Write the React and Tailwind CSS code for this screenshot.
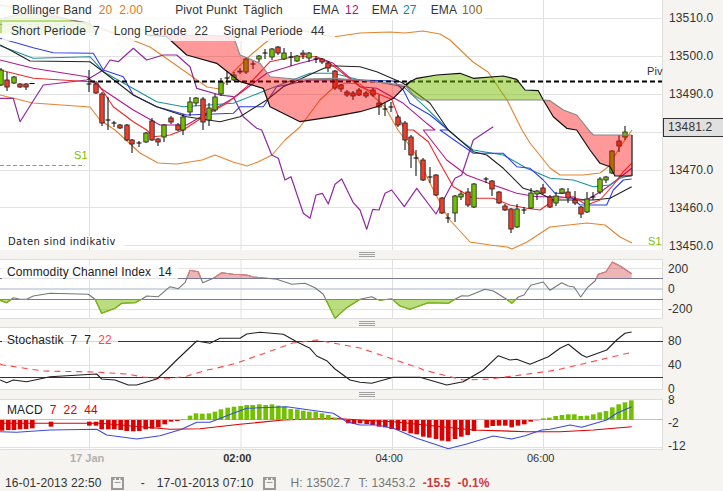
import React from "react";

const z = (ox, oy, a) => a.map(([x, y]) => [ox + x / 3, oy + y / 3]);
const pts = (a) => a.map(([x, y]) => `${x.toFixed(1)},${y.toFixed(1)}`).join(" ");

const L = (a) => z(0, 0, a);
const R = (a) => z(360, 0, a);
const L3 = (a) => z(0, 130, a);
const R3 = (a) => z(360, 130, a);

const bbUp = [[0,5],[40,12],[83,23],[100,28],[127,38],[150,47],[173,63],[190,75],[207,87],[220,89],[233,72],[253,53],[277,33],[300,30],[333,37],[360,33],[390,32],[405,33],[423,31],[440,34],[450,40],[473,62],[488,72],[507,100],[522,130],[530,143],[550,168],[560,175],[583,175],[600,173],[608,167],[620,147],[632,130]];
const bbLo = [[0,95],[33,103],[90,107],[100,120],[115,130],[140,153],[158,163],[177,164],[202,160],[215,155],[233,162],[247,166],[258,162],[272,155],[285,140],[300,127],[320,100],[333,88],[345,83],[360,84],[370,93],[385,107],[398,130],[415,153],[432,187],[448,218],[470,242],[490,245],[507,247],[512,249],[527,242],[550,227],[587,223],[605,225],[620,237],[632,243]];
const black = [...L([[0,135],[30,150],[90,183],[270,185],[310,215],[400,285],[470,320],[560,350],[660,365],[720,350],[800,300],[850,260],[960,210],[990,197],[1080,200]]), ...R([[50,215],[130,250],[210,310],[265,390]]), ...R3([[340,65],[380,75],[430,115],[490,175],[540,190],[580,210],[700,210],[750,205],[815,170]])];
const teal = [...L([[0,137],[100,175],[270,170],[310,215],[390,260],[470,305],[550,320],[700,310],[800,270],[930,220],[1000,220],[1080,240]]), ...R([[50,245],[130,260],[200,325],[265,390]]), ...R3([[300,30],[340,60],[430,75],[500,115],[570,145],[640,150],[700,170],[750,165],[780,145],[815,135]])];
const blue = [...L([[0,115],[100,143],[160,158],[280,160],[310,210],[370,230],[400,285],[470,320],[560,345],[700,340],[720,320],[790,320],[830,260],[930,240],[1080,240]]), ...R([[100,243],[130,270],[150,310],[210,345],[265,390]]), ...R3([[240,0],[290,35],[340,70],[430,70],[470,110],[510,115],[550,150],[585,190],[620,190],[660,225],[740,225],[760,180],[790,150],[815,147]])];
const red = [...L([[0,210],[100,235],[270,245],[290,245],[340,320],[400,365],[440,390],[460,410],[510,405],[550,390],[610,350],[680,310],[740,260],[810,185],[880,170],[950,170],[990,190],[1080,260]]), ...R([[95,298],[115,350],[135,390]]), ...R3([[160,0],[205,35],[240,100],[280,170],[340,205],[400,205],[450,225],[500,235],[540,240],[590,205],[640,200],[680,225],[720,210],[760,165],[790,125],[815,100]])];
const magenta = [...L([[0,180],[100,205],[260,230],[310,270],[400,330],[480,375],[560,375],[620,340],[700,295],[800,220],[900,190],[960,175],[1000,190],[1080,260]]), ...R([[50,265],[130,310],[200,370],[225,390]]), ...R3([[190,0],[260,90],[320,135],[400,165],[470,190],[530,200],[600,200],[680,210],[730,180],[770,150],[815,115]])];
const purple = [...L([[0,295],[40,295],[60,365],[130,255],[260,240],[310,210],[330,180],[355,185],[400,145],[440,180],[490,165],[530,165],[570,200],[590,265],[660,285],[700,290],[730,350],[770,385]]), ...L3([[785,0],[815,75],[835,85],[855,150],[873,140],[910,250],[930,265],[948,195],[967,190],[985,222],[1005,163],[1025,147],[1060,218],[1080,240]]), ...R3([[20,298],[38,238],[57,240],[75,190],[95,180],[133,230],[170,175],[228,252],[285,145],[305,135],[340,30],[385,0]]), ...R([[400,380]])];

const cloudR1Top = [...L([[440,105],[700,108],[720,165],[780,190],[810,230],[890,238],[1000,235],[1080,240]]), ...R([[130,255]])];
const cloudR1Bot = [...R([[150,245],[130,265],[100,295],[50,320],[0,335]]), ...L([[1000,350],[900,365],[810,320],[790,265],[720,245],[650,190],[560,165],[500,110],[440,105]])];
const cloudGTop = R([[135,255],[150,245],[170,235],[230,225],[300,220],[340,235],[430,228],[470,238],[495,270],[535,272],[550,300]]);
const cloudGBot = R([[550,300],[185,300],[160,285],[135,255]]);
const cloudR2Top = [...R([[550,300],[570,302],[610,330],[650,345],[690,395]]), ...R3([[700,15],[815,15]])];
const cloudR2Bot = [...R3([[815,138],[765,138],[750,110],[720,100],[690,60],[650,0]]), ...R([[620,385],[580,350],[550,300]])];
const cloudG0 = L([[0,57],[50,45],[100,40],[270,70],[290,100],[0,100]]);

// x, bodyTop, bodyBottom, wickTop, wickBottom, kind
const candles = [
  [1,70,85,68,86,"g"],[7,80,87,72,91,"r"],[14,77,83,76,84,"g"],[20,84,87,83,88,"r"],[26,84,87,83,90,"r"],[32,83.5,83.5,83,84,"c"],
  [89,84,84,70,92,"c"],[96,84,93,82,94,"r"],[102,94,123,92,126,"r"],[108,120,120,97,130,"c"],[114,123,123,121,127,"c"],[120,125,128,124,129,"r"],[127,125,140,124,141,"r"],
  [132,140,144,139,153,"r"],[139,143,143,141,147,"c"],[146,133,142,132,143,"g"],[152,121,140,118,141,"r"],[158,139,142,138,146,"r"],[164,125,137,124,142,"g"],
  [171,118,122,116,124,"r"],[178,125,130,123,131,"r"],[183,117,130,114,135,"g"],[190,102,112,97,116,"g"],[196,98,103,97,106,"g"],[203,99,122,97,130,"r"],[209,108,120,103,126,"g"],[215,97,110,94,112,"g"],
  [221,82,94,78,96,"g"],[227,78,78,71,85,"c"],[234,75,80,72,81,"g"],[240,71,72,68,74,"r"],[246,59,72,57,74,"g"],[253,64,64,61,69,"c"],[259,56,59,55,62,"g"],[265,53,53,49,59,"c"],
  [272,49,57,48,60,"g"],[278,47,53,46,55,"r"],[284,53,59,48,60,"g"],[291,57,57,52,66,"c"],[297,56,61,55,62,"g"],[303,53,55,50,59,"r"],[309,53,58,52,62,"g"],[316,59,59,56,63,"c"],[322,59,62,58,64,"r"],
  [328,63,68,61,72,"r"],[335,71,88,70,90,"r"],[341,85,89,84,92,"r"],[347,92,95,90,97,"r"],[353,93,96,91,100,"r"],[359,90,95,88,96,"r"],[366,93,96,91,98,"r"],[373,90,95,88,97,"r"],
  [379,103,107,95,115,"r"],[385,109,109,103,116,"c"],[391,107,107,102,112,"c"],[398,117,125,115,127,"r"],[405,123,140,121,150,"r"],[411,137,155,135,168,"r"],[416,158,158,150,176,"c"],[423,160,180,158,181,"r"],
  [430,177,177,167,183,"c"],[436,175,195,174,196,"r"],[442,198,213,197,214,"r"],[448,218,218,213,223,"c"],[455,196,213,195,222,"g"],[461,194,197,191,200,"g"],[468,192,205,188,207,"r"],[474,184,207,183,208,"g"],
  [486,179,179,177,183,"c"],[492,181,189,180,196,"r"],[499,192,203,191,204,"r"],[505,206,210,204,211,"r"],[511,209,229,208,233,"r"],[517,209,227,204,228,"g"],[524,210,210,207,214,"c"],
  [531,193,208,188,209,"g"],[537,191,194,190,200,"g"],[543,188,193,184,194,"r"],[550,197,207,195,208,"r"],[556,196,203,192,206,"g"],[562,189,193,188,194,"g"],[568,192,198,188,203,"r"],[575,200,203,191,205,"r"],
  [581,207,214,206,218,"r"],[587,199,212,192,213,"g"],[593,197,197,192,200,"c"],[600,179,192,177,194,"g"],[606,177,180,176,183,"g"],[612,151,173,150,174,"g"],[619,141,146,135,152,"r"],[625,132,137,126,140,"g"],
];

const Candles = () => (
  <g>
    {candles.map(([x, t, b, hi, lo, k], i) => (
      <g key={i}>
        <line x1={x} x2={x} y1={hi} y2={lo} stroke="#000" strokeWidth="1" />
        {k === "c" ? (
          <line x1={x - 2.5} x2={x + 2.5} y1={t} y2={t} stroke="#000" strokeWidth="1" />
        ) : (
          <rect x={x - 2.2} y={t} width="4.4" height={b - t} fill={k === "g" ? "#72c000" : "#f03c28"} stroke="#222" strokeWidth="0.8" />
        )}
      </g>
    ))}
  </g>
);

const HGrid = ({ ys }) => ys.map((y) => <line key={y} x1="0" x2="663" y1={y} y2={y} stroke="#e2e2e2" strokeWidth="1" />);
const VGrid = ({ y1, y2 }) => [89.5, 241, 392.5, 543.5].map((x) => <line key={x} x1={x} x2={x} y1={y1} y2={y2} stroke="#e0e0e0" strokeWidth="1" />);
const Poly = ({ p, c, w = 1, dash }) => <polyline points={pts(p)} fill="none" stroke={c} strokeWidth={w} strokeLinejoin="round" strokeDasharray={dash} />;

const Main = () => (
  <svg viewBox="0 0 663 250" className="block h-[250px] w-[663px]">
    <HGrid ys={[18.5, 56.5, 94.5, 132.5, 170.5, 207.5, 245.5]} />
    <VGrid y1={0} y2={250} />
    <Poly p={[[0,24.5],[84,24.5]]} c="#aaa" dash="4 3" />
    <Poly p={[[0,165.5],[85,165.5]]} c="#7ac000" dash="4 2.5" />
    <Poly p={bbUp} c="#e5832f" w={1.1} />
    <Poly p={bbLo} c="#e5832f" w={1.1} />
    <Poly p={purple} c="#8e2aa0" w={1.2} />
    <Poly p={magenta} c="#b01a8c" w={1.1} />
    <Poly p={teal} c="#1f8f9f" w={1.1} />
    <Poly p={blue} c="#2f3fe8" w={1.1} />
    <Poly p={black} c="#222" w={1.1} />
    <Poly p={red} c="#f02828" w={1.1} />
    <Candles />
    <line x1="90" x2="662" y1="81.5" y2="81.5" stroke="#000" strokeWidth="2" strokeDasharray="5 3" />
    <polygon points={pts([...cloudR1Top, ...cloudR1Bot])} fill="#ff0000" fillOpacity="0.4" />
    <polygon points={pts([...cloudR2Top, ...cloudR2Bot])} fill="#ff0000" fillOpacity="0.4" />
    <polygon points={pts([...cloudGTop, ...cloudGBot])} fill="#76bc00" fillOpacity="0.5" />
    <polygon points={pts(cloudG0)} fill="#76bc00" fillOpacity="0.5" />
    <Poly p={cloudG0.slice(0, 5)} c="#888" w={1.1} />
    <Poly p={cloudR1Top} c="#888" w={1.1} />
    <Poly p={cloudR1Bot} c="#111" w={1.2} />
    <Poly p={cloudGTop} c="#111" w={1.2} />
    <Poly p={cloudGBot} c="#888" w={1.2} />
    <Poly p={cloudR2Top} c="#888" w={1.2} />
    <Poly p={cloudR2Bot} c="#111" w={1.2} />
    <line x1="632" x2="632" y1="135" y2="176" stroke="#111" strokeWidth="1.2" />
  </svg>
);

const cci = [...z(0, 250, [[0,148],[20,155],[40,140],[60,145],[80,145],[100,135],[150,127],[265,130],[285,145],[305,187],[345,172],[365,157],[405,155],[425,145],[440,135],[475,137],[510,107],[535,113],[555,95],[570,58],[595,62],[608,95],[640,82],[665,65],[700,70],[740,72],[760,78],[830,85],[875,100],[915,97],[945,110],[970,130],[1005,202],[1040,170],[1080,145]]), ...z(360, 250, [[35,137],[50,145],[60,148],[95,143],[120,165],[150,175],[205,155],[265,157],[285,145],[305,134],[325,135],[375,115],[400,120],[440,145],[455,157],[475,138],[492,132],[512,103],[550,93],[570,118],[605,95],[625,105],[642,108],[662,138],[682,110],[705,90],[715,70],[738,62],[757,33],[780,45],[815,68]])];

const Cci = () => {
  const first = cci[0][0];
  const last = cci[cci.length - 1][0];
  return (
    <svg viewBox="0 259 663 59" className="block h-[59px] w-[663px]">
      <defs>
        <clipPath id="cUp"><rect x="0" y="255" width="663" height="22" /></clipPath>
        <clipPath id="cDn"><rect x="0" y="298" width="663" height="22" /></clipPath>
      </defs>
      <HGrid ys={[267.5, 308.5]} />
      <VGrid y1={259} y2={318} />
      <line x1="0" x2="663" y1="277.5" y2="277.5" stroke="#77779a" />
      <line x1="0" x2="663" y1="288" y2="288" stroke="#c2ccd8" strokeWidth="1.5" />
      <line x1="0" x2="663" y1="298.5" y2="298.5" stroke="#77779a" />
      <Poly p={cci} c="#777" w={1.1} />
      <polygon clipPath="url(#cUp)" points={pts([[first, 277], ...cci, [last, 277]])} fill="#cc3333" fillOpacity="0.36" />
      <polygon clipPath="url(#cDn)" points={pts([[first, 298], ...cci, [last, 298]])} fill="#76bc00" fillOpacity="0.5" />
      <g clipPath="url(#cUp)"><Poly p={cci} c="#e08080" w={1.1} /></g>
      <g clipPath="url(#cDn)"><Poly p={cci} c="#76bc00" w={1.1} /></g>
    </svg>
  );
};

const stK = [...z(0, 370, [[0,30],[20,38],[40,30],[80,35],[150,20],[290,12],[305,27],[345,30],[385,45],[410,45],[470,27],[500,0]]), ...z(0, 250, [[530,330],[590,273],[630,280],[660,265],[720,265],[740,252],[780,247],[850,253],[890,275],[930,295],[950,318],[980,332],[1005,357]]), ...z(0, 370, [[1050,30],[1080,37]]), ...z(360, 370, [[35,40],[100,22],[180,22],[260,45],[310,35],[370,0]]), ...z(360, 250, [[415,317],[450,330],[470,328],[510,343],[565,320],[600,295],[625,283],[665,315],[680,322],[740,300],[770,270],[795,250],[815,246]])];
const stD = [[0,364],[3,365],[43,371],[93,372],[127,374],[143,377],[167,379],[187,376],[207,370],[213,369],[237,363],[293,343],[317,340],[360,348],...z(360, 250, [[180,355]]),...z(360, 370, [[190,0],[310,30],[380,28],[460,18],[590,0]]),...z(360, 250, [[815,307]])];

const Stoch = () => (
  <svg viewBox="0 328 663 61" className="block h-[61px] w-[663px]">
    <HGrid ys={[365.5]} />
    <VGrid y1={327} y2={389} />
    <line x1="0" x2="663" y1="341.5" y2="341.5" stroke="#2222aa" />
    <line x1="0" x2="663" y1="377.5" y2="377.5" stroke="#2222aa" />
    <Poly p={stD} c="#f44" w={1.1} dash="6 5" />
    <Poly p={stK} c="#222" w={1.1} />
  </svg>
);

const macdL = [[6,182],[25,180],[42,180],[60,178],[78,177],[97,175],[153,170,155],[268,167,155],[288,167,155],[305,178],[325,178],[343,178],[362,180],[380,183],[400,184],[418,183],[437,178],[456,176],[475,172],[494,163],[513,155],[532,153],[550,148],[570,137],[588,130],[607,131],[627,130],[645,125],[663,118],[683,113],[702,110],[722,108],[740,105],[758,105],[778,103],[797,105],[816,103],[835,107],[853,110],[872,117],[892,118],[910,122],[928,125],[947,125],[966,130],[985,135],[1005,143],[1025,149],[1045,160],[1062,162]];
const macdR = [[0,160],[20,162],[38,165],[57,170],[76,172],[95,177],[114,180],[133,183],[152,190],[170,193],[190,200],[208,203],[228,207],[246,212],[265,214],[285,207],[304,200],[323,195],[342,183],[380,173],[398,168],[417,167],[436,167],[455,172],[474,167],[493,163],[512,155],[530,151],[550,145],[568,143],[587,138],[606,135],[625,133],[643,133],[662,138],[681,137],[700,133],[719,127],[738,123],[757,112],[776,103],[795,97],[814,91]];
const bars = [...macdL.map(([x, v, t]) => [x / 3, v, t]), ...macdR.map(([x, v]) => [360 + x / 3, v])];

const macdSig = [...z(0, 370, [[0,160],[300,160],[510,178],[600,176],[720,163],[850,150],[1000,145],[1080,150]]), ...z(360, 370, [[100,155],[340,180],[500,185],[600,185],[700,180],[815,170]])];
const macdLine = [...z(0, 370, [[0,185],[50,187],[150,180],[290,178],[320,195],[410,207],[480,197],[545,178],[590,157],[630,157],[700,130],[740,115],[860,110],[1000,130],[1040,155],[1080,165]]), ...z(360, 370, [[50,165],[100,175],[170,205],[265,236],[320,222],[400,198],[455,207],[495,197],[545,180],[570,178],[630,165],[665,172],[740,150],[770,130],[815,110]])];

const Macd = () => (
  <svg viewBox="0 400 663 49" className="block h-[49px] w-[663px]">
    <HGrid ys={[447.5]} />
    <VGrid y1={399} y2={449} />
    <line x1="0" x2="663" y1="419.5" y2="419.5" stroke="#b8c4d0" />
    <Poly p={macdSig} c="#dd0000" w={1.1} />
    {bars.map(([x, v, t], i) => {
      const y = 370 + v / 3;
      const top = t ? 370 + t / 3 : y < 420 ? y : 420;
      const bot = y < 420 ? 420 : y;
      return <rect key={i} x={x - 2.3} y={top} width="4.6" height={bot - top} fill={y < 420 ? "#72c000" : "#dd0000"} />;
    })}
    <Poly p={macdLine} c="#3a4ae0" w={1.1} />
  </svg>
);

const Grip = ({ tall }) => (
  <div className={`flex w-[663px] items-center justify-center pl-[71px] ${tall ? "h-[9px]" : "h-[8px]"}`}>
    <div className="flex w-[16px] flex-col gap-px">
      <div className="h-px bg-[#a0a0a0]" />
      <div className="h-px bg-[#a0a0a0]" />
      <div className="h-px bg-[#a0a0a0]" />
    </div>
  </div>
);

const Cal = () => (
  <svg width="13" height="13" viewBox="0 0 13 13" className="block shrink-0">
    <rect width="13" height="13" fill="#999" />
    <rect x="2" y="3" width="9" height="8" fill="#f5f4f0" />
    <rect x="3.5" y="1" width="1.5" height="3" fill="#f5f4f0" />
    <rect x="8" y="1" width="1.5" height="3" fill="#f5f4f0" />
    <rect x="3.5" y="5" width="6" height="1" fill="#999" />
  </svg>
);

const Ax = ({ h, children }) => <div className="flex items-center leading-[11px]" style={{ height: h }}>{children}</div>;

export default function App() {
  return (
    <div className="flex h-[491px] w-[723px] flex-col overflow-hidden bg-[#f5f4f0] font-['Liberation_Sans',sans-serif] text-[12px] leading-[13px] tracking-[0.12px] text-[#333]">
      <div className="relative flex h-[250px]">
        <div className="relative w-[663px] border-r border-[#ddd] bg-white">
          <Main />
          <div className="absolute left-0 top-0 flex h-[20px] w-[484px] items-center bg-white/80 pl-[12px]">
            <span>Bollinger Band</span>
            <span className="ml-[7px] text-[#e07818]">20</span>
            <span className="ml-[7px] text-[#e07818]">2.00</span>
            <span className="ml-[32px]">Pivot Punkt</span>
            <span className="ml-[6px]">Täglich</span>
            <span className="ml-[30px]">EMA</span>
            <span className="ml-[6px] text-[#a8107c]">12</span>
            <span className="ml-[13px]">EMA</span>
            <span className="ml-[5px] text-[#108898]">27</span>
            <span className="ml-[14px]">EMA</span>
            <span className="ml-[5px] text-[#8a6420]">100</span>
          </div>
          <div className="absolute left-[2px] top-[22px] flex h-[19px] w-[333px] items-center bg-white/80 pl-[9px]">
            <span>Short Periode</span>
            <span className="ml-[7px]">7</span>
            <span className="ml-[14px]">Long Periode</span>
            <span className="ml-[8px]">22</span>
            <span className="ml-[15px]">Signal Periode</span>
            <span className="ml-[8px]">44</span>
          </div>
          <span className="absolute left-[74px] top-[149px] text-[11px] text-[#7ac000]">S1</span>
          <span className="absolute left-[647px] top-[65px] text-[11px] text-[#333]">Piv</span>
          <span className="absolute left-[648px] top-[235px] text-[11px] text-[#7ac000]">S1</span>
          <div className="absolute left-0 top-[236px] flex h-[10px] w-[125px] items-center bg-white/80 pl-[8px] font-['DejaVu_Sans',sans-serif] text-[10px] tracking-[0.4px] text-[#222]">
            Daten sind indikativ
          </div>
        </div>
        <div className="pl-[6px]">
          {["13510.0", "13500.0", "13490.0", "", "13470.0", "13460.0", "13450.0"].map((t, i) => (
            <Ax key={i} h={37.9}>{t}</Ax>
          ))}
        </div>
        <div className="absolute right-0 top-[118px] flex h-[19px] w-[60px] items-center border border-r-0 border-[#333] bg-[#e0e0e0] pl-[4px]">13481.2</div>
      </div>

      <Grip tall />

      <div className="flex h-[60px]">
        <div className="relative w-[663px] border-y border-r border-[#ddd] bg-white">
          <Cci />
          <div className="absolute left-[2px] top-[5px] flex h-[15px] w-[176px] items-center bg-white/80 pl-[5px]">
            <span className="text-[#222]">Commodity Channel Index</span>
            <span className="ml-[7px] text-[#222]">14</span>
          </div>
        </div>
        <div className="pl-[5px]">
          {["200", "0", "-200"].map((t) => <Ax key={t} h={20}>{t}</Ax>)}
        </div>
      </div>

      <Grip />

      <div className="flex h-[63px]">
        <div className="relative w-[663px] border-y border-r border-[#ddd] bg-white">
          <Stoch />
          <div className="absolute left-[2px] top-[5px] flex h-[14px] w-[116px] items-center bg-white/80 pl-[5px]">
            <span className="text-[#222]">Stochastik</span>
            <span className="ml-[7px] text-[#222]">7</span>
            <span className="ml-[7px] text-[#222]">7</span>
            <span className="ml-[7px] text-[#f44]">22</span>
          </div>
        </div>
        <div className="pl-[5px] pt-[2px]">
          {["80", "40", "0"].map((t) => <Ax key={t} h={24}>{t}</Ax>)}
        </div>
      </div>

      <Grip tall />

      <div className="flex h-[51px]">
        <div className="relative w-[663px] border-y border-r border-[#ddd] bg-white">
          <Macd />
          <div className="absolute left-[2px] top-[3px] flex h-[15px] w-[100px] items-center bg-white/80 pl-[5px]">
            <span className="text-[#222]">MACD</span>
            <span className="ml-[7px] text-[#dd0000]">7</span>
            <span className="ml-[7px] text-[#dd0000]">22</span>
            <span className="ml-[7px] text-[#dd0000]">44</span>
          </div>
        </div>
        <div className="-mt-[10px] pl-[5px]">
          {["8", "-2", "-12"].map((t) => <Ax key={t} h={23}>{t}</Ax>)}
        </div>
      </div>

      <div className="flex h-[26px] items-start pt-[2px] text-[11px] tracking-normal">
        <span className="ml-[70px] font-bold text-[#b0b0b0]">17 Jan</span>
        <span className="ml-[119px] font-bold text-[#333]">02:00</span>
        <span className="ml-[124px]">04:00</span>
        <span className="ml-[124px]">06:00</span>
      </div>

      <div className="flex h-[15px] items-center pl-[5px]">
        <span>16-01-2013 22:50</span>
        <span className="ml-[9px]"><Cal /></span>
        <span className="ml-[17px]">-</span>
        <span className="ml-[12px]">17-01-2013 07:10</span>
        <span className="ml-[10px]"><Cal /></span>
        <span className="ml-[14px] text-[#777]">H: 13502.7</span>
        <span className="ml-[8px] text-[#777]">T: 13453.2</span>
        <span className="ml-[7px] font-bold text-[#cc3a3a]">-15.5</span>
        <span className="ml-[7px] font-bold text-[#cc3a3a]">-0.1%</span>
      </div>
    </div>
  );
}
